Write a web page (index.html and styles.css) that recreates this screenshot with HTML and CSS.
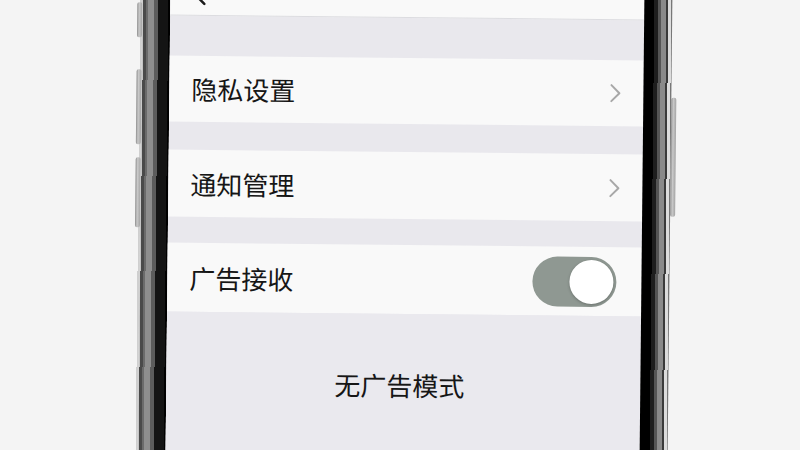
FILE: index.html
```html
<!DOCTYPE html>
<html lang="zh-CN">
<head>
    <meta charset="UTF-8">
    <meta name="viewport" content="width=device-width, initial-scale=1.0">
    <title>设置</title>
    <link rel="stylesheet" href="styles.css">
</head>
<body>
    <div class="stage">
        <div class="phone">
            <!-- 左侧按键 -->
            <div class="keys keys-left">
                <span class="key key-mute"></span>
                <span class="key key-up"></span>
                <span class="key key-down"></span>
            </div>
            <div class="bezel bezel-left"></div>

            <div class="screen">
                <div class="navbar">
                    <svg class="back" width="14" height="24" viewBox="0 0 14 24">
                        <polyline points="12,2 2,12 12,22" fill="none" stroke="#1c1c1c" stroke-width="2.5" stroke-linecap="round" stroke-linejoin="round"/>
                    </svg>
                </div>
                <div class="gap gap-1"></div>
                <div class="cell cell-privacy">
                    <span class="label">隐私设置</span>
                    <svg class="chevron" width="12" height="20" viewBox="0 0 12 20">
                        <polyline points="2,2 10,10 2,18" fill="none" stroke="#a8a8a8" stroke-width="2" stroke-linecap="round" stroke-linejoin="round"/>
                    </svg>
                </div>
                <div class="gap gap-2"></div>
                <div class="cell cell-notify">
                    <span class="label">通知管理</span>
                    <svg class="chevron" width="12" height="20" viewBox="0 0 12 20">
                        <polyline points="2,2 10,10 2,18" fill="none" stroke="#a8a8a8" stroke-width="2" stroke-linecap="round" stroke-linejoin="round"/>
                    </svg>
                </div>
                <div class="gap gap-3"></div>
                <div class="cell cell-ads">
                    <span class="label">广告接收</span>
                    <span class="switch"><span class="knob"></span></span>
                </div>
                <div class="bottom">
                    <p class="mode">无广告模式</p>
                </div>
            </div>

            <div class="bezel bezel-right"></div>
            <!-- 右侧电源键 -->
            <div class="keys keys-right">
                <span class="key key-power"></span>
            </div>
        </div>
    </div>
</body>
</html>
```

FILE: styles.css
```css
body {
    margin: 0;
    background: #f4f4f4;
    font-family: "Noto Sans CJK SC", "Noto Sans", sans-serif;
    color: #161616;
}

.stage {
    display: flex;
    width: 800px;
    height: 450px;
    overflow: hidden;
}

.phone {
    display: flex;
    width: 540px;
    height: 490px;
    margin: -20px 0 0 135px;
    flex-shrink: 0;
    transform: rotate(0.6deg);
}

/* 按键 */
.keys {
    display: flex;
    flex-direction: column;
    width: 5px;
}

.key {
    display: block;
    width: 5px;
    background: linear-gradient(to right, #8d8d8d, #c9c9c9 40%, #a4a4a4);
    border-radius: 2px;
}

.keys-left {
    background: linear-gradient(to right, transparent 0 3px, #cfcfcf 3px);
}

.key-mute {
    margin-top: 25px;
    height: 35px;
}

.key-up {
    margin-top: 32px;
    height: 75px;
}

.key-down {
    margin-top: 13px;
    height: 70px;
}

.key-power {
    margin-top: 115px;
    height: 119px;
}

/* 边框 */
.bezel {
    width: 28px;
}

.bezel-left {
    background: linear-gradient(to right,
        #c4c4c4 0 1px,
        #4a4a4a 1px 4px,
        #6b6b6b 4px 6px,
        #8e8e8e 6px 12px,
        #5c5c5c 12px 16px,
        #141414 16px 26px,
        #000 26px);
}

.bezel-right {
    background: linear-gradient(to right,
        #000 0 10px,
        #1e1e1e 10px 14px,
        #555 14px 17px,
        #8a8a8a 17px 22px,
        #3a3a3a 22px 24px,
        #dcdcdc 24px 27px,
        #777 27px);
}

/* 屏幕 */
.screen {
    display: flex;
    flex-direction: column;
    width: 474px;
    background: #e9e8ed;
}

.navbar {
    box-sizing: border-box;
    height: 38px;
    padding: 4px 0 0 22px;
    background: #f9f9f9;
    border-bottom: 1px solid #dcdce0;
}

.back {
    display: block;
}

.gap-1 {
    height: 40px;
}

.gap-2 {
    height: 28px;
}

.gap-3 {
    height: 26px;
}

.cell {
    display: flex;
    align-items: center;
    justify-content: space-between;
    padding: 0 22px 0 22px;
    background: #f9f9f9;
}

.cell-privacy {
    height: 66px;
}

.cell-notify {
    height: 67px;
}

.cell-ads {
    height: 69px;
}

.label {
    font-size: 26px;
    line-height: 30px;
}

.chevron {
    display: block;
}

/* 开关 */
.switch {
    display: flex;
    align-items: center;
    justify-content: flex-end;
    box-sizing: border-box;
    width: 84px;
    height: 50px;
    margin-right: 3px;
    padding: 3px;
    border-radius: 25px;
    background: #8f9892;
}

.knob {
    width: 44px;
    height: 44px;
    border-radius: 50%;
    background: #fff;
    box-shadow: 0 1px 3px rgba(0, 0, 0, 0.25);
}

.bottom {
    flex: 1;
    background: #eae9ee;
}

.mode {
    margin: 0;
    padding-top: 56px;
    text-align: center;
    font-size: 26px;
    line-height: 30px;
    padding-right: 8px;
}
```
